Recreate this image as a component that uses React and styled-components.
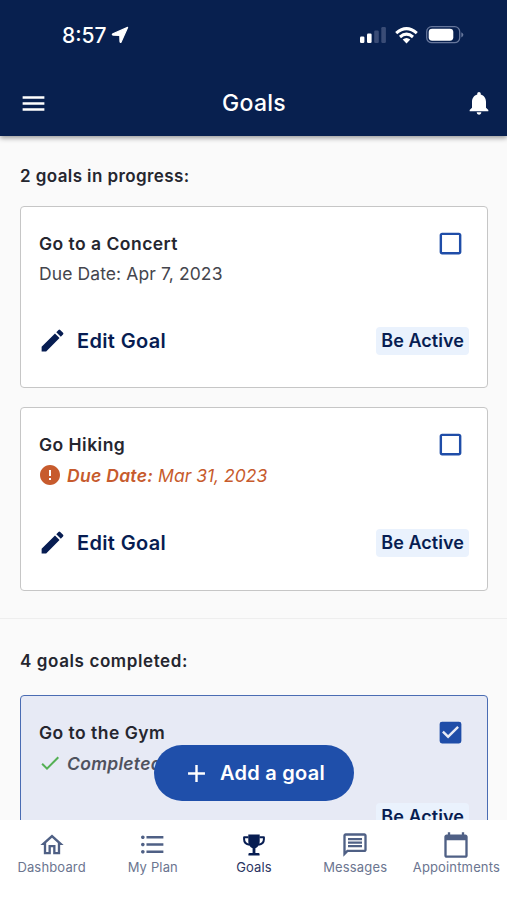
import React from 'react'
import styled, { createGlobalStyle } from 'styled-components'
import {
  MdAdd,
  MdCalendarToday,
  MdCheck,
  MdCheckBox,
  MdCheckBoxOutlineBlank,
  MdEdit,
  MdError,
  MdFormatListBulleted,
  MdMenu,
  MdNotifications,
  MdOutlineHome,
  MdOutlineMessage,
} from 'react-icons/md'

const inProgress = [
  { id: 1, title: 'Go to a Concert', date: 'Apr 7, 2023', tag: 'Be Active' },
  { id: 2, title: 'Go Hiking', date: 'Mar 31, 2023', tag: 'Be Active', late: true },
]

const tabs = [
  { label: 'Dashboard', icon: MdOutlineHome, size: 28 },
  { label: 'My Plan', icon: MdFormatListBulleted, size: 29 },
  { label: 'Goals', icon: Trophy, size: 24, active: true },
  { label: 'Messages', icon: MdOutlineMessage, size: 28 },
  { label: 'Appointments', icon: MdCalendarToday, size: 28 },
]

function Trophy({ size }) {
  return (
    <svg width={size} height={size} viewBox='0 0 24 24' fill='currentColor'>
      <path d='M6.3 1.5 H17.7 V8 C17.7 12.2 15.8 14.2 13.4 15.3 V20 H16.4 Q17.6 20 17.6 21.2 V22.6 H6.4 V21.2 Q6.4 20 7.6 20 H10.6 V15.3 C8.2 14.2 6.3 12.2 6.3 8 Z' />
      <path d='M6.5 4.2 H2.1 V6.3 C2.1 9.2 4.2 11.3 7.6 11.8 M17.5 4.2 H21.9 V6.3 C21.9 9.2 19.8 11.3 16.4 11.8' fill='none' stroke='currentColor' strokeWidth='2' strokeLinejoin='round' />
    </svg>
  )
}

function StatusBar() {
  return (
    <Status>
      <Clock>
        <span>8:57</span>
        <svg width='18' height='18' viewBox='0 0 18 18'>
          <path d='M16.6 1.4 L10.2 15.8 Q9.2 17.2 9 15.5 L8.8 9.4 L2.2 9.1 Q.6 8.6 1.9 7.8 Z' fill='#fff' stroke='#fff' strokeWidth='1.2' strokeLinejoin='round' />
        </svg>
      </Clock>
      <Signals>
        <svg width='27' height='17' viewBox='0 0 27 17'>
          <rect x='0' y='9.5' width='4.4' height='6.5' rx='1.2' fill='#fff' />
          <rect x='7' y='6.5' width='4.6' height='9.5' rx='1.2' fill='#fff' />
          <rect x='14.2' y='3.5' width='4.6' height='12.5' rx='1.2' fill='#3a4c76' />
          <rect x='21.3' y='0' width='4.6' height='16' rx='1.2' fill='#3a4c76' />
        </svg>
        <svg width='23' height='17' viewBox='0 0 23 17' fill='none' stroke='#fff' strokeWidth='3'>
          <path d='M1.2 6.2 Q11.5 -3 21.8 6.2' />
          <path d='M5 10 Q11.5 4.3 18 10' />
          <path d='M7.7 12.6 Q11.5 9.6 15.3 12.6 L11.5 16.4 Z' fill='#fff' stroke='none' />
        </svg>
        <svg width='38' height='18' viewBox='0 0 38 18'>
          <rect x='.7' y='.7' width='33' height='16' rx='5' fill='none' stroke='#66769b' strokeWidth='1.3' />
          <rect x='2.7' y='2.7' width='24.6' height='12' rx='3.4' fill='#fff' />
          <path d='M35.3 6.2 Q37.4 7.2 37.4 8.8 Q37.4 10.4 35.3 11.4 Z' fill='#66769b' />
        </svg>
      </Signals>
    </Status>
  )
}

function GoalCard({ goal }) {
  return (
    <Card $tall={goal.late}>
      <TopRow>
        <Title>{goal.title}</Title>
        <MdCheckBoxOutlineBlank size={29} />
      </TopRow>
      {goal.late ? (
        <LateLine>
          <MdError size={24} />
          <b>Due Date:</b>
          <span>{goal.date}</span>
        </LateLine>
      ) : (
        <DueLine>Due Date: {goal.date}</DueLine>
      )}
      <BottomRow>
        <EditButton>
          <MdEdit size={29} />
          <span>Edit Goal</span>
        </EditButton>
        <Tag>{goal.tag}</Tag>
      </BottomRow>
    </Card>
  )
}

export default function App() {
  return (
    <Screen>
      <GlobalStyle />
      <Header>
        <StatusBar />
        <AppBar>
          <MdMenu size={29} />
          <h1>Goals</h1>
          <MdNotifications size={28} />
        </AppBar>
      </Header>
      <Content>
        <Section>
          <Heading>2 goals in progress:</Heading>
          {inProgress.map((goal) => (
            <GoalCard key={goal.id} goal={goal} />
          ))}
        </Section>
        <Section $completed>
          <Heading $completed>4 goals completed:</Heading>
          <Card $done>
            <TopRow>
              <Title>Go to the Gym</Title>
              <MdCheckBox size={29} />
            </TopRow>
            <DoneLine>
              <MdCheck size={24} />
              <b>Completed</b>
            </DoneLine>
            <BottomRow $done>
              <Tag>Be Active</Tag>
            </BottomRow>
          </Card>
        </Section>
        <AddButton>
          <MdAdd size={29} />
          <span>Add a goal</span>
        </AddButton>
      </Content>
      <TabBar>
        {tabs.map(({ label, icon: Icon, size, active }) => (
          <Tab key={label} $active={active}>
            <TabIcon>
              <Icon size={size} />
            </TabIcon>
            <span>{label}</span>
          </Tab>
        ))}
      </TabBar>
    </Screen>
  )
}

const GlobalStyle = createGlobalStyle`
  * {
    box-sizing: border-box;
  }
  body {
    margin: 0;
    font-family: Inter, 'Liberation Sans', sans-serif;
  }
  svg {
    display: block;
    flex-shrink: 0;
  }
  button {
    font-family: inherit;
    border: none;
    background: none;
    padding: 0;
  }
  h1, h2, h3, p {
    margin: 0;
  }
`
const Screen = styled.div`
  display: flex;
  flex-direction: column;
  width: 507px;
  height: 900px;
  overflow: hidden;
  background-color: #fafafa;
`
const Header = styled.header`
  flex: 0 0 136px;
  z-index: 1;
  color: #ffffff;
  background-color: #08204f;
  box-shadow: 0 2px 5px rgba(0, 0, 0, 0.4);
`
const Status = styled.div`
  display: flex;
  justify-content: space-between;
  align-items: center;
  height: 70px;
  padding: 0 43px 0 62px;
`
const Clock = styled.div`
  display: flex;
  align-items: center;
  gap: 4px;
  font-size: 21px;
  font-weight: 500;
  letter-spacing: 0;
`
const Signals = styled.div`
  display: flex;
  align-items: center;
  gap: 8px;
`
const AppBar = styled.div`
  display: flex;
  justify-content: space-between;
  align-items: center;
  height: 66px;
  padding: 0 14px 0 19px;
  h1 {
    margin-right: 5px;
    font-size: 23px;
    font-weight: 500;
    letter-spacing: 0.3px;
  }
`
const Content = styled.main`
  position: relative;
  flex: 1;
  min-height: 0;
  overflow: hidden;
`
const Section = styled.section`
  display: flex;
  flex-direction: column;
  height: 483px;
  padding: 29px 19px 0 20px;
  border-bottom: 1px solid #eeeeee;
  ${(props) => props.$completed && 'padding-top: 31px;'}
`
const Heading = styled.h2`
  height: 22px;
  margin-bottom: ${(props) => (props.$completed ? '23px' : '19px')};
  font-size: 17px;
  line-height: 22px;
  font-weight: 600;
  letter-spacing: ${(props) => (props.$completed ? '0.6px' : '0.4px')};
  color: #25262f;
`
const Card = styled.article`
  display: flex;
  flex-direction: column;
  height: ${(props) => (props.$tall ? '184px' : '182px')};
  flex-shrink: 0;
  margin-bottom: 19px;
  padding: 22px 18px 0;
  border: 1px solid ${(props) => (props.$done ? '#4a6cb3' : '#c6c6c6')};
  border-radius: 4px;
  background-color: ${(props) => (props.$done ? '#e7eaf5' : '#ffffff')};
`
const TopRow = styled.div`
  display: flex;
  justify-content: space-between;
  align-items: center;
  height: 29px;
  padding-right: 4px;
  color: #1f4da8;
`
const Title = styled.h3`
  font-size: 17.5px;
  font-weight: 600;
  letter-spacing: 0.47px;
  color: #25262f;
`
const DueLine = styled.p`
  height: 31px;
  font-size: 17.5px;
  line-height: 32px;
  letter-spacing: 0.1px;
  color: #44454d;
`
const LateLine = styled.p`
  display: flex;
  align-items: center;
  height: 32px;
  margin-left: -1px;
  font-size: 17.5px;
  font-style: italic;
  color: #c75b2d;
  b {
    margin: 0 5px;
    font-weight: 600;
    letter-spacing: 0.3px;
  }
`
const DoneLine = styled(LateLine)`
  color: #4f525e;
  svg {
    color: #54b054;
  }
`
const BottomRow = styled.div`
  display: flex;
  justify-content: ${(props) => (props.$done ? 'flex-end' : 'space-between')};
  align-items: center;
  margin-top: ${(props) => (props.$done ? '24px' : '37px')};
`
const EditButton = styled.button`
  display: flex;
  align-items: center;
  gap: 10px;
  margin-left: -1px;
  font-size: 20px;
  font-weight: 600;
  letter-spacing: 0.35px;
  color: #071d52;
`
const Tag = styled.span`
  height: 28px;
  padding: 0 5px;
  border-radius: 4px;
  font-size: 18px;
  line-height: 28px;
  font-weight: 600;
  letter-spacing: 0.05px;
  color: #071d52;
  background-color: #eaf2fd;
`
const AddButton = styled.button`
  position: absolute;
  left: 154px;
  bottom: 19px;
  display: flex;
  align-items: center;
  gap: 9px;
  width: 200px;
  height: 56px;
  padding-left: 28px;
  border-radius: 28px;
  font-size: 20px;
  font-weight: 600;
  letter-spacing: 0.25px;
  color: #ffffff;
  background-color: #1f4faa;
`
const TabBar = styled.nav`
  display: grid;
  grid-template-columns: repeat(5, 1fr);
  flex: 0 0 80px;
  padding-left: 1px;
  background-color: #ffffff;
`
const Tab = styled.div`
  display: flex;
  flex-direction: column;
  align-items: center;
  padding-top: 10px;
  font-size: 13px;
  letter-spacing: 0.15px;
  color: ${(props) => (props.$active ? '#2b3563' : '#6b7590')};
  svg {
    color: ${(props) => (props.$active ? '#071d52' : '#4f6085')};
  }
`
const TabIcon = styled.div`
  display: flex;
  align-items: center;
  height: 29px;
`
